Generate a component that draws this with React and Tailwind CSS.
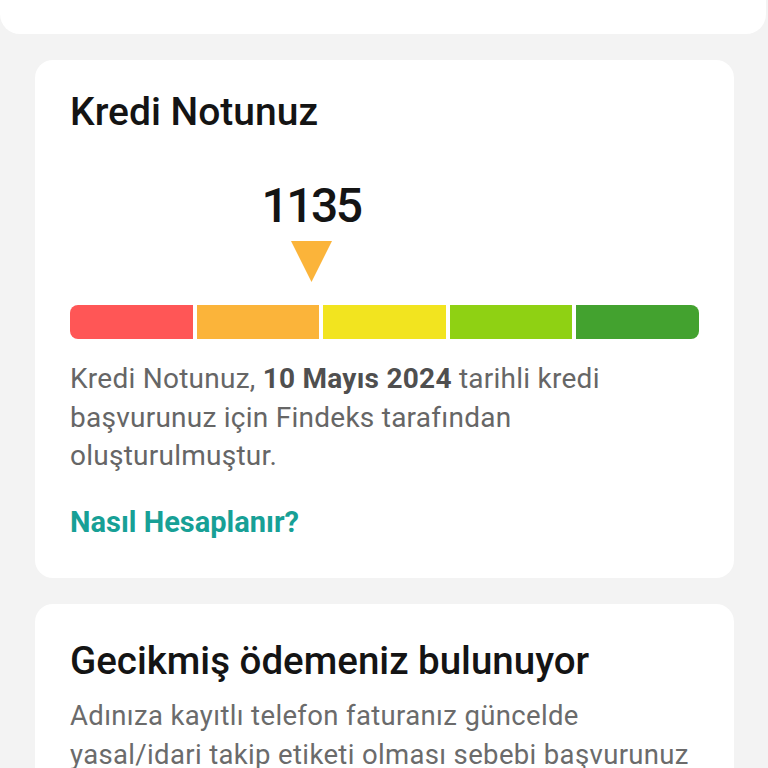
export default function App() {
  const font = { fontFamily: 'Roboto, "Noto Sans", sans-serif' };
  return (
    <div className="min-h-screen bg-[#f3f3f3] overflow-hidden" style={font}>
      <div className="h-[34px] w-[766px] bg-white rounded-b-[20px]" />
      <div className="mt-[26px] mx-[35px] w-[699px] rounded-[18px] bg-white px-[35px] pt-[30px] pb-[38px]">
        <h2 className="text-[39px] leading-[44px] font-medium text-[#141414]">Kredi Notunuz</h2>
        <div className="mt-[47px] flex flex-col items-center w-[482px]">
          <div className="text-[48px] leading-[50px] font-medium text-[#141414] tracking-[-2.5px]">1135</div>
          <svg width="41" height="41" viewBox="0 0 41 41" className="mt-[10px]">
            <polygon points="0,0 41,0 20.5,41" fill="#fbb43a" />
          </svg>
        </div>
        <div className="mt-[23px] flex gap-[4px] h-[34px]">
          <div className="flex-1 bg-[#ff5656] rounded-l-[8px]" />
          <div className="flex-1 bg-[#fbb43a]" />
          <div className="flex-1 bg-[#f2e41f]" />
          <div className="flex-1 bg-[#8fd113]" />
          <div className="flex-1 bg-[#43a22f] rounded-r-[8px]" />
        </div>
        <p className="mt-[21px] text-[28px] leading-[38.5px] tracking-[0.25px] text-[#666666]">
          Kredi Notunuz, <span className="font-bold text-[#4f4f4f]">10 Mayıs 2024</span> tarihli kredi
          <br />
          başvurunuz için Findeks tarafından
          <br />
          oluşturulmuştur.
        </p>
        <div className="mt-[28px] text-[29px] leading-[36px] font-bold text-[#17a096]">Nasıl Hesaplanır?</div>
      </div>
      <div className="mt-[26px] mx-[35px] w-[699px] rounded-[18px] bg-white px-[35px] pt-[35px] pb-[36px]">
        <h2 className="text-[38.5px] leading-[44px] font-medium text-[#141414]">Gecikmiş ödemeniz bulunuyor</h2>
        <p className="mt-[13px] text-[27.5px] leading-[39px] tracking-[0.35px] text-[#6b6b6b]">
          Adınıza kayıtlı telefon faturanız güncelde
          <br />
          yasal/idari takip etiketi olması sebebi başvurunuz
          <br />
          değerlendirilememektedir.
        </p>
      </div>
    </div>
  );
}
